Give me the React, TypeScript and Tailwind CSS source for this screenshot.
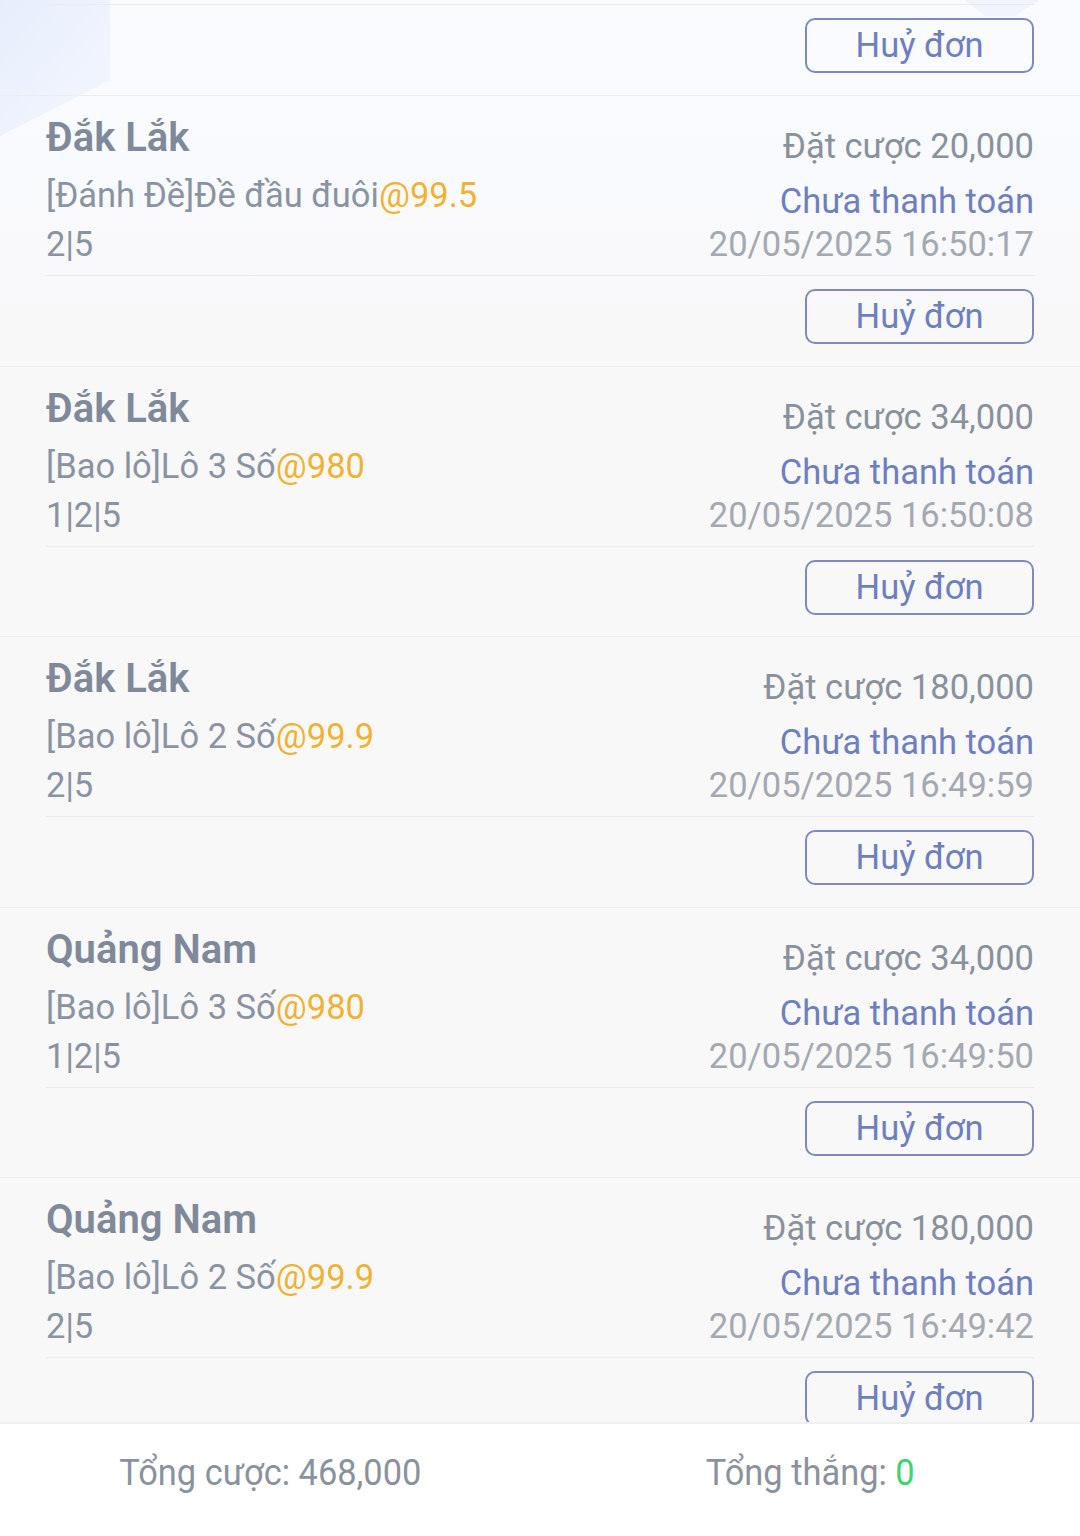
import React from 'react';

interface Bet {
  region: string;
  kind: string;
  odds: string;
  numbers: string;
  amount: string;
  time: string;
}

const bets: Bet[] = [
  { region: 'Đắk Lắk', kind: '[Đánh Đề]Đề đầu đuôi', odds: '@99.5', numbers: '2|5', amount: '20,000', time: '20/05/2025 16:50:17' },
  { region: 'Đắk Lắk', kind: '[Bao lô]Lô 3 Số', odds: '@980', numbers: '1|2|5', amount: '34,000', time: '20/05/2025 16:50:08' },
  { region: 'Đắk Lắk', kind: '[Bao lô]Lô 2 Số', odds: '@99.9', numbers: '2|5', amount: '180,000', time: '20/05/2025 16:49:59' },
  { region: 'Quảng Nam', kind: '[Bao lô]Lô 3 Số', odds: '@980', numbers: '1|2|5', amount: '34,000', time: '20/05/2025 16:49:50' },
  { region: 'Quảng Nam', kind: '[Bao lô]Lô 2 Số', odds: '@99.9', numbers: '2|5', amount: '180,000', time: '20/05/2025 16:49:42' },
];

const CancelButton = () => (
  <div className="flex justify-end mt-[13px]">
    <button className="w-[229px] h-[55px] rounded-[10px] border-2 border-[#7d89c0] text-[34.5px] leading-none text-[#6e7fbf]">
      Huỷ đơn
    </button>
  </div>
);

// phần cuối của đơn phía trên (đã cuộn qua)
const CardTail = () => (
  <div className="h-[96px] pt-[4px] border-b border-[#ededf0] px-[46px]">
    <div className="border-t border-[#ebebee]"></div>
    <CancelButton />
  </div>
);

const BetCard = ({ bet }: { bet: Bet }) => (
  <div className="h-[270.5px] border-b border-[#ededf0] px-[46px]">
    {/* thông tin */}
    <div className="flex justify-between items-start h-[173px]">
      <div className="pt-[17px]">
        <div className="text-[40px] font-semibold leading-[50px] text-[#7f8999]">{bet.region}</div>
        <div className="mt-[7px] text-[34.5px] leading-[50px] text-[#8a93a2]">
          {bet.kind}
          <span className="text-[#f0b232]">{bet.odds}</span>
        </div>
        <div className="text-[34.5px] leading-[48px] text-[#8a93a2]">{bet.numbers}</div>
      </div>
      <div className="pt-[29px] text-right text-[34.5px] leading-[42px]">
        <div className="text-[#89919c]">Đặt cược {bet.amount}</div>
        <div className="mt-[13px] text-[#6e7fbf]">Chưa thanh toán</div>
        <div className="mt-[1px] text-[#a4a9b1]">{bet.time}</div>
      </div>
    </div>
    <div className="mt-[6px] border-t border-[#ebebee]"></div>
    <CancelButton />
  </div>
);

export default function App() {
  return (
    <div
      className="h-[1536px] flex flex-col bg-[#f8f8f9]"
      style={{ fontFamily: 'Roboto, "Noto Sans", sans-serif' }}
    >
      <div className="relative flex-1 overflow-hidden bg-[linear-gradient(180deg,#f9fbff_0px,#f9fafd_180px,#f8f8f9_320px)]">
        {/* hoạ tiết nền */}
        <svg className="absolute left-0 top-0" width="1080" height="140" viewBox="0 0 1080 140">
          <defs>
            <linearGradient id="lb" x1="0" y1="0" x2="1" y2="1">
              <stop offset="0" stopColor="#e6eefc" />
              <stop offset="1" stopColor="#eef3fd" stopOpacity="0.6" />
            </linearGradient>
          </defs>
          <path d="M0 0 H110 V80 L0 136 Z" fill="url(#lb)" />
          <path d="M965 0 H1040 L1015 16 H985 Z" fill="#edf2fc" opacity="0.7" />
        </svg>
        <div className="relative">
          <CardTail />
          {bets.map((b, i) => (
            <BetCard key={i} bet={b} />
          ))}
        </div>
      </div>

      {/* tổng kết */}
      <div className="h-[114px] shrink-0 bg-white border-t-2 border-[#efeff1] grid grid-cols-2 items-center pb-[14px]">
        <div className="text-center">
          <span className="inline-block scale-x-[0.93] text-[37px] text-[#8a929d]">Tổng cược: 468,000</span>
        </div>
        <div className="text-center">
          <span className="inline-block scale-x-[0.93] text-[37px] text-[#8a929d]">
            Tổng thắng: <span className="text-[#3dd472]">0</span>
          </span>
        </div>
      </div>
    </div>
  );
}
